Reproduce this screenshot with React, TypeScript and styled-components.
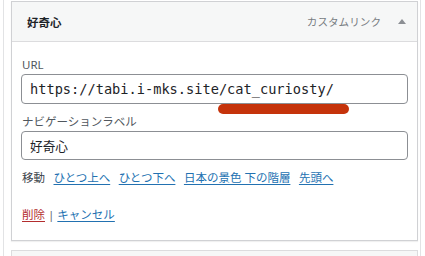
import React from 'react';
import styled, { createGlobalStyle } from 'styled-components';

const GlobalStyle = createGlobalStyle`
  html, body {
    margin: 0;
    padding: 0;
    background: #fff;
  }
  body {
    font-family: "Noto Sans", "Noto Sans CJK JP", sans-serif;
    color: #1d2327;
  }
`;

const Page = styled.div`
  position: relative;
  width: 425px;
  height: 256px;
  overflow: hidden;
  background: #fff;
`;

const Frame = styled.div`
  margin-left: 3px;
  width: 418px;
  height: 256px;
  box-sizing: border-box;
  padding: 1px 4px 0 7px;
  border-left: 1px solid #e2e3e5;
  border-right: 1px solid #e2e3e5;
`;

const MenuItem = styled.div`
  width: 407px;
  box-sizing: border-box;
  border: 1px solid #d0d1d4;
  background: #fff;
  box-shadow: 0 1px 1px rgba(0, 0, 0, 0.06);
`;

const ItemHeader = styled.div`
  display: flex;
  align-items: center;
  height: 39px;
  padding: 0 11px 0 15px;
  background: #f6f7f7;
  border-bottom: 1px solid #dcdcde;
`;

const ItemTitle = styled.span`
  flex: 1;
  font-size: 11.5px;
  font-weight: 600;
  color: #1d2327;
`;

const ItemType = styled.span`
  font-size: 10.6px;
  color: #787c82;
  margin-right: 17px;
`;

const Toggle = styled.span`
  width: 0;
  height: 0;
  border-left: 4px solid transparent;
  border-right: 4px solid transparent;
  border-bottom: 5px solid #8c8f94;
  margin-top: -1px;
`;

const ItemBody = styled.div`
  padding: 15px 9px 17px 9px;
`;

const FieldLabel = styled.div`
  font-size: 11.5px;
  line-height: 16px;
  color: #50575e;
  padding-left: 1px;
`;

const TextInput = styled.div<{ $mono?: boolean; $h: number }>`
  display: flex;
  align-items: center;
  margin-top: 1px;
  height: ${(p) => p.$h}px;
  box-sizing: border-box;
  border: 1px solid #8c8f94;
  border-radius: 4px;
  padding: 0 8px;
  background: #fff;
  color: #1d2327;
  font-family: ${(p) =>
    p.$mono ? '"DejaVu Sans Mono", "Liberation Mono", monospace' : '"Noto Sans CJK JP", sans-serif'};
  font-size: ${(p) => (p.$mono ? '13.65px' : '12.7px')};
  white-space: nowrap;
`;

const Field = styled.div`
  & + & {
    margin-top: 10px;
  }
`;

const MoveRow = styled.div`
  display: flex;
  align-items: center;
  gap: 8.5px;
  margin-top: 10px;
  font-size: 11.5px;
  line-height: 16px;
  color: #3c434a;
  padding-left: 1px;
`;

const Link = styled.a<{ $danger?: boolean }>`
  color: ${(p) => (p.$danger ? '#b32d2e' : '#2271b1')};
  text-decoration: underline;
  text-underline-offset: 2px;
  cursor: pointer;
`;

const ActionRow = styled.div`
  margin-top: 21px;
  font-size: 11.5px;
  line-height: 16px;
  color: #3c434a;
  padding-left: 1px;
`;

const Sep = styled.span`
  color: #646970;
  margin: 0 3px;
`;

const NextItem = styled.div`
  margin-top: 9px;
  width: 407px;
  height: 20px;
  box-sizing: border-box;
  border: 1px solid #dcdcde;
  border-bottom: none;
  background: #f6f7f7;
`;

// annotation drawn over the screenshot
const Marker = styled.div`
  position: absolute;
  left: 218px;
  top: 104px;
  width: 131px;
  height: 10px;
  border-radius: 5px;
  background: #c5330b;
`;

const moveLinks = ['ひとつ上へ', 'ひとつ下へ', '日本の景色 下の階層', '先頭へ'];

function App() {
  return (
    <Page>
      <GlobalStyle />
      <Frame>
        <MenuItem>
          <ItemHeader>
            <ItemTitle>好奇心</ItemTitle>
            <ItemType>カスタムリンク</ItemType>
            <Toggle />
          </ItemHeader>
          <ItemBody>
            <Field>
              <FieldLabel>URL</FieldLabel>
              <TextInput $mono $h={30}>https://tabi.i-mks.site/cat_curiosty/</TextInput>
            </Field>
            <Field>
              <FieldLabel>ナビゲーションラベル</FieldLabel>
              <TextInput $h={29}>好奇心</TextInput>
            </Field>
            <MoveRow>
              <span>移動</span>
              {moveLinks.map((item) => (
                <Link key={item}>{item}</Link>
              ))}
            </MoveRow>
            <ActionRow>
              <Link $danger>削除</Link>
              <Sep>|</Sep>
              <Link>キャンセル</Link>
            </ActionRow>
          </ItemBody>
        </MenuItem>
        <NextItem />
      </Frame>
      <Marker />
    </Page>
  );
}

export default App;
